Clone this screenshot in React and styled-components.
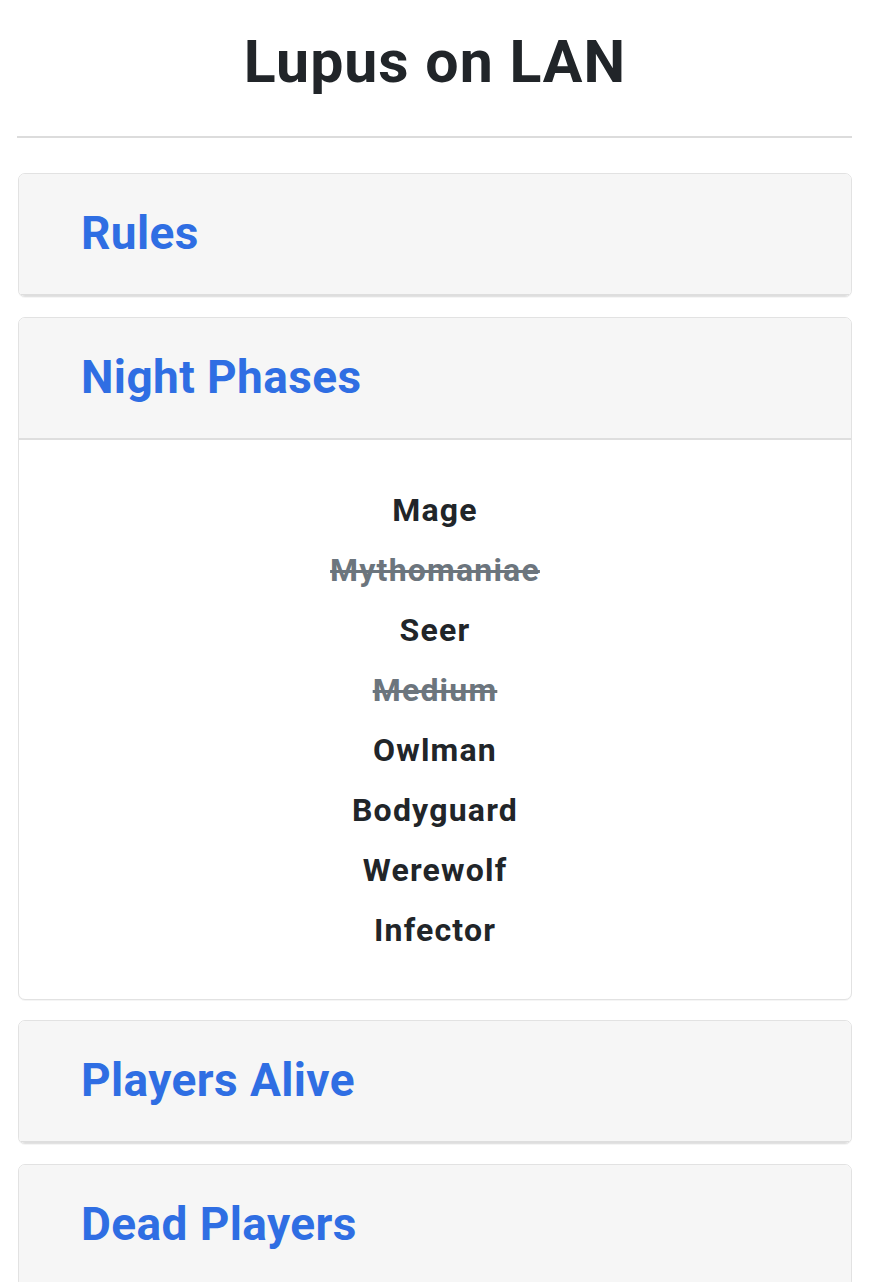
import React from "react";
import styled, { createGlobalStyle } from "styled-components";

const Global = createGlobalStyle`
  html, body { margin: 0; padding: 0; background: #ffffff; }
  body { font-family: Roboto, "Liberation Sans", Arial, sans-serif; color: #212529; }
`;

const Page = styled.div`
  padding: 0 20px 0 18px;
  display: flex;
  flex-direction: column;
`;

const Title = styled.h1`
  margin: 27px 0 39px;
  text-align: center;
  font-size: 59px;
  line-height: 70px;
  font-weight: 700;
  letter-spacing: 1px;
  color: #212529;
`;

const Rule = styled.hr`
  margin: 0 0 35px -1px;
  border: 0;
  border-top: 2px solid #dcdcdc;
`;

const Cards = styled.div`
  display: flex;
  flex-direction: column;
  gap: 20px;
`;

const Card = styled.section`
  border: 1px solid #e2e2e2;
  border-radius: 7px;
  background: #ffffff;
  overflow: hidden;
  box-shadow: 0 1px 0 rgba(0, 0, 0, 0.04);
`;

const CardHeader = styled.header`
  background: #f6f6f6;
  border-bottom: 2px solid #dedede;
  padding: 32px 62px 33px;
`;

const HeaderButton = styled.button`
  border: 0;
  background: none;
  padding: 0;
  margin: 0;
  font-family: Roboto, "Liberation Sans", Arial, sans-serif;
  font-size: 46px;
  line-height: 55px;
  font-weight: 700;
  letter-spacing: 0.4px;
  color: #2f6ee3;
  cursor: pointer;
  text-align: left;
`;

const CardBody = styled.ul`
  list-style: none;
  margin: 0;
  padding: 40px 0 39px;
  display: flex;
  flex-direction: column;
  align-items: center;
`;

const Phase = styled.li`
  font-size: 32px;
  line-height: 60px;
  font-weight: 700;
  letter-spacing: 1.2px;
  color: ${(p) => (p.$off ? "#6c757d" : "#212529")};
  text-decoration: ${(p) => (p.$off ? "line-through" : "none")};
  text-decoration-thickness: 3px;
`;

const phases = [
  { name: "Mage" },
  { name: "Mythomaniae", off: true },
  { name: "Seer" },
  { name: "Medium", off: true },
  { name: "Owlman" },
  { name: "Bodyguard" },
  { name: "Werewolf" },
  { name: "Infector" },
];

export default function App() {
  return (
    <>
      <Global />
      <Page>
        <Title>Lupus on LAN</Title>
        <Rule />
        <Cards>
          <Card>
            <CardHeader>
              <HeaderButton>Rules</HeaderButton>
            </CardHeader>
          </Card>
          <Card>
            <CardHeader>
              <HeaderButton>Night Phases</HeaderButton>
            </CardHeader>
            <CardBody>
              {phases.map((p) => (
                <Phase key={p.name} $off={p.off}>
                  {p.name}
                </Phase>
              ))}
            </CardBody>
          </Card>
          <Card>
            <CardHeader>
              <HeaderButton>Players Alive</HeaderButton>
            </CardHeader>
          </Card>
          <Card>
            <CardHeader>
              <HeaderButton>Dead Players</HeaderButton>
            </CardHeader>
          </Card>
        </Cards>
      </Page>
    </>
  );
}
